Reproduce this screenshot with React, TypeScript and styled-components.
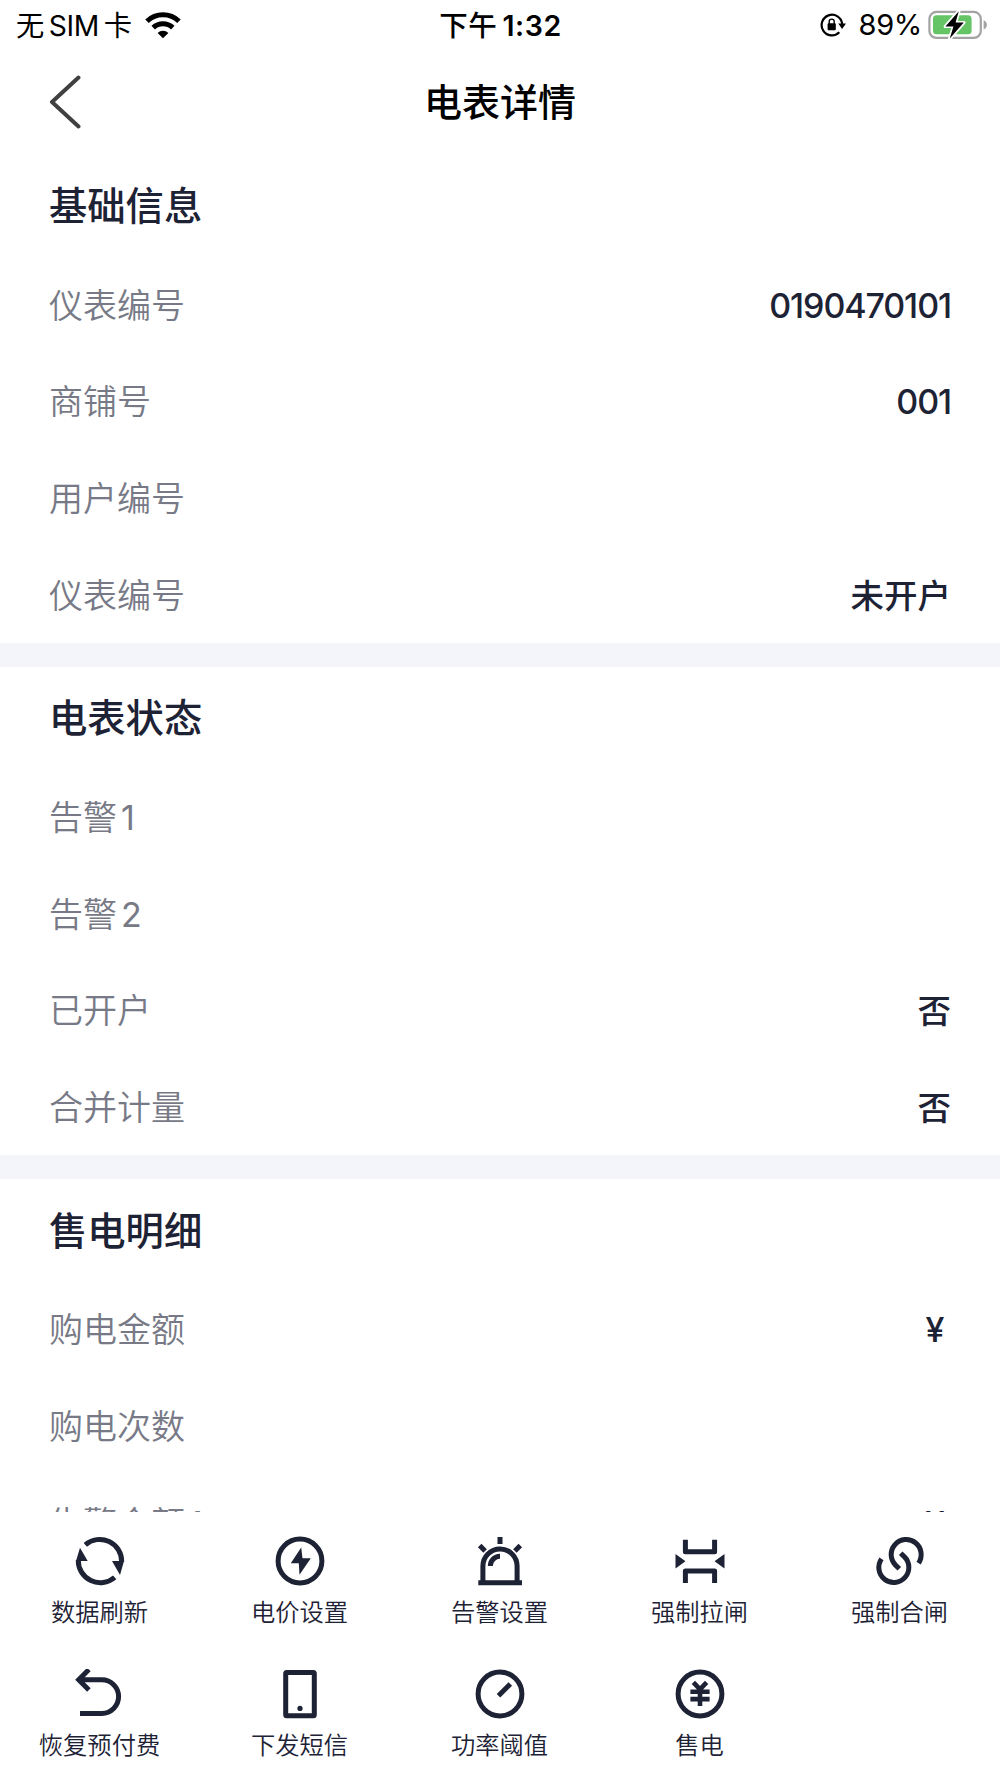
import React from "react";
import styled, { createGlobalStyle } from "styled-components";

const GlobalStyle = createGlobalStyle`
  *, *::before, *::after { box-sizing: border-box; }
  body {
    margin: 0;
    background: #fff;
    font-family: Inter, "Noto Sans CJK SC", sans-serif;
    color: #1d2235;
  }
`;

const Screen = styled.div`
  display: flex;
  flex-direction: column;
  width: 1000px;
  height: 1778px;
  overflow: hidden;
  background: #fff;
`;

const StatusBar = styled.header`
  flex: none;
  display: grid;
  grid-template-columns: 1fr auto 1fr;
  align-items: center;
  height: 53px;
  padding: 0 12px 4px 16px;
  color: #000;
  font-size: 28.3px;
  white-space: nowrap;
`;

const StatusGroup = styled.div<{ $end?: boolean }>`
  display: flex;
  align-items: center;
  justify-content: ${(p) => (p.$end ? "flex-end" : "flex-start")};
`;

const Carrier = styled.span`
  margin: -2px 12px 0 0;
  letter-spacing: -0.3px;
  word-spacing: -3px;
`;

const Clock = styled.time`
  margin: -2px 3px 0 0;
  font-weight: 600;
  font-size: 28.5px;
  letter-spacing: 0.6px;
`;

const Meridiem = styled.span`
  font-weight: 500;
  margin-right: 5px;
`;

const Percent = styled.span`
  margin: 0 6px 0 12px;
  font-size: 29px;
  letter-spacing: -0.3px;
`;

const NavBar = styled.nav`
  flex: none;
  display: grid;
  grid-template-columns: 1fr auto 1fr;
  align-items: center;
  height: 101.3px;
  padding: 0 49px 4px 49px;
`;

const BackButton = styled.button`
  display: flex;
  width: 34px;
  padding: 0;
  border: 0;
  background: none;
`;

const PageTitle = styled.h1`
  margin: 0;
  color: #000;
  font-size: 38px;
  font-weight: 500;
  line-height: 52px;
`;

const Content = styled.main`
  flex: 1;
  min-height: 0;
  overflow: hidden;
`;

const Section = styled.section`
  padding: 0 49px;
  border-bottom: 24px solid #f4f5fa;
  height: 512.3px;
`;

const SectionTitle = styled.h2`
  display: flex;
  align-items: center;
  height: 101.6px;
  margin: 0;
  padding-bottom: 3px;
  font-size: 38.3px;
  font-weight: 500;
`;

const Row = styled.div`
  display: flex;
  align-items: center;
  justify-content: space-between;
  height: 96.67px;
  padding-top: 3px;
  font-size: 34px;
  line-height: 50px;
`;

const Label = styled.span`
  color: #777a86;
  font-weight: 350;
`;

const LabelNumber = styled.span`
  margin-left: 4px;
  font-weight: 400;
`;

const Value = styled.span<{ $kind: "number" | "currency" | "text" }>`
  font-size: ${(p) => (p.$kind === "text" ? "33.5px" : "34px")};
  font-weight: ${(p) => (p.$kind === "text" ? 500 : 450)};
  letter-spacing: ${(p) => (p.$kind === "number" ? "-1.1px" : "0")};
  margin-right: ${(p) => (p.$kind === "currency" ? "6.5px" : "0")};
`;

const Toolbar = styled.footer`
  flex: none;
  display: grid;
  grid-template-columns: repeat(5, 200px);
  grid-auto-rows: 133.2px;
  height: 266.4px;
  background: #fff;
`;

const Action = styled.button`
  display: flex;
  flex-direction: column;
  align-items: center;
  padding: 24.5px 1px 0 0;
  border: 0;
  background: none;
  color: #1d2235;
  font-family: inherit;
  font-size: 24.3px;
  font-weight: 350;
  line-height: 34px;
`;

const ActionIcon = styled.svg`
  display: block;
  width: 50px;
  height: 50px;
  margin: 0 0 9px 1.6px;
  fill: none;
  stroke: currentColor;
  stroke-width: 5;
`;

const Solid = styled.g`
  fill: currentColor;
  stroke: none;
`;

const icons = {
  refresh: (
    <>
      <path d="M10.3 8.8A22 22 0 0 1 46.7 26M39.7 41.3A22 22 0 0 1 3.3 24" />
      <Solid>
        <path d="M37 25h12l-4 14zM5 11.7 12.7 25H1z" />
      </Solid>
    </>
  ),
  price: (
    <>
      <circle cx="25" cy="25" r="21.9" />
      <Solid>
        <path d="M26.2 11.5 15.8 27.2h8l.7 11.6L35.8 22.3h-8.3z" />
      </Solid>
    </>
  ),
  alarm: (
    <path d="M25 1v7M4.7 9.5l5.4 5.4M45.3 9.5l-5.4 5.4M7.9 46V30a17.1 17.1 0 0 1 34.2 0v16M3.3 46.8h43.7M15.3 30a9.7 9.7 0 0 1 9.7-9.7" />
  ),
  open: (
    <>
      <path strokeLinejoin="round" d="M10.4 3.7v12h29.2v-12M10.4 47V35h29.2v12" />
      <Solid>
        <path d="m.5 18 10 7.3-10 7.3zM49.5 18l-10 7.3 10 7.3z" />
      </Solid>
    </>
  ),
  close: (
    <path d="M24.3 32.8 20.5 29.1A15 15 0 1 1 43.5 27.1M25.7 17.2 29.5 20.9A15 15 0 1 1 6.5 22.9" />
  ),
  restore: <path d="M13.9.5 3.7 10.8l10.2 10.3M4 10.8h22.8a16.8 16.8 0 0 1 0 33.6H5" />,
  phone: (
    <>
      <rect x="10.7" y="3.5" width="28.6" height="43.3" rx="1" />
      <Solid>
        <circle cx="25" cy="39.4" r="2.6" />
      </Solid>
    </>
  ),
  gauge: (
    <>
      <circle cx="25" cy="25" r="21.9" />
      <path d="M23.5 26.7 35.3 14.9" />
    </>
  ),
  sell: (
    <>
      <circle cx="25" cy="25" r="21.9" />
      <path
        strokeWidth="4.6"
        d="m18.4 13.4 6.6 7 6.6-7M25 19v18M15.4 22.7h19.2M15.4 30.1h19.2"
      />
    </>
  ),
};

const actions: { icon: keyof typeof icons; text: string }[] = [
  { icon: "refresh", text: "数据刷新" },
  { icon: "price", text: "电价设置" },
  { icon: "alarm", text: "告警设置" },
  { icon: "open", text: "强制拉闸" },
  { icon: "close", text: "强制合闸" },
  { icon: "restore", text: "恢复预付费" },
  { icon: "phone", text: "下发短信" },
  { icon: "gauge", text: "功率阈值" },
  { icon: "sell", text: "售电" },
];

type RowData = { label: string; index?: number; value?: string };

const sections: { title: string; rows: RowData[] }[] = [
  {
    title: "基础信息",
    rows: [
      { label: "仪表编号", value: "0190470101" },
      { label: "商铺号", value: "001" },
      { label: "用户编号" },
      { label: "仪表编号", value: "未开户" },
    ],
  },
  {
    title: "电表状态",
    rows: [
      { label: "告警", index: 1 },
      { label: "告警", index: 2 },
      { label: "已开户", value: "否" },
      { label: "合并计量", value: "否" },
    ],
  },
  {
    title: "售电明细",
    rows: [
      { label: "购电金额", value: "¥" },
      { label: "购电次数" },
      { label: "告警金额", index: 1, value: "¥" },
    ],
  },
];

const kindOf = (value: string) =>
  value === "¥" ? "currency" : /^\d+$/.test(value) ? "number" : "text";

const WifiIcon = () => (
  <svg width="38" height="28" viewBox="0 0 38 28">
    <path d="M3 10.2a23 23 0 0 1 32 0M9.2 16.6a14.2 14.2 0 0 1 19.6 0" fill="none" stroke="#000" strokeWidth="5" />
    <path d="M19 27.2l-5.4-5.3a7.8 7.8 0 0 1 10.8 0z" />
  </svg>
);

const RotationLockIcon = () => (
  <svg width="26" height="24" viewBox="0 0 26 24">
    <path d="M19.3 19.3A10.3 10.3 0 1 1 22.2 11" fill="none" stroke="#000" strokeWidth="2.2" />
    <path d="M18.3 10.4H26l-3.9 5.6z" />
    <rect x="7.6" y="10.2" width="8.2" height="7" rx="1" />
    <path d="M9.2 11V8.6a2.5 2.5 0 0 1 5 0V11" fill="none" stroke="#000" strokeWidth="1.4" />
  </svg>
);

const BatteryIcon = () => (
  <svg width="60" height="30" viewBox="0 0 60 30">
    <rect x="1.4" y="1.9" width="51.4" height="26" rx="7" fill="none" stroke="#a3a3a3" strokeWidth="2.2" />
    <path d="M55.6 10.3c4.4 1.6 4.4 7.6 0 9.2z" fill="#a3a3a3" />
    <rect x="5" y="5.3" width="38.6" height="19" rx="3.6" fill="#65c466" />
    <path
      d="M30.8 1.2 17.4 16.4h8l-3.6 12.2 14-16h-8.2z"
      stroke="#fff"
      strokeWidth="3.4"
      strokeLinejoin="round"
      paintOrder="stroke"
    />
  </svg>
);

export default function App() {
  return (
    <>
      <GlobalStyle />
      <Screen>
        <StatusBar>
          <StatusGroup>
            <Carrier>无 SIM 卡</Carrier>
            <WifiIcon />
          </StatusGroup>
          <Clock>
            <Meridiem>下午</Meridiem>1:32
          </Clock>
          <StatusGroup $end>
            <RotationLockIcon />
            <Percent>89%</Percent>
            <BatteryIcon />
          </StatusGroup>
        </StatusBar>
        <NavBar>
          <BackButton aria-label="返回">
            <svg width="34" height="54" viewBox="0 0 34 54">
              <path d="M29.5 2.5 3 27l26.5 24.5" fill="none" stroke="#404040" strokeWidth="4" strokeLinecap="round" strokeLinejoin="round" />
            </svg>
          </BackButton>
          <PageTitle>电表详情</PageTitle>
        </NavBar>
        <Content>
          {sections.map((section) => (
            <Section key={section.title}>
              <SectionTitle>{section.title}</SectionTitle>
              {section.rows.map(({ label, index, value }, i) => (
                <Row key={i}>
                  <Label>
                    {label}
                    {index && <LabelNumber>{index}</LabelNumber>}
                  </Label>
                  {value && <Value $kind={kindOf(value)}>{value}</Value>}
                </Row>
              ))}
            </Section>
          ))}
        </Content>
        <Toolbar>
          {actions.map(({ icon, text }) => (
            <Action key={text}>
              <ActionIcon viewBox="0 0 50 50">{icons[icon]}</ActionIcon>
              {text}
            </Action>
          ))}
        </Toolbar>
      </Screen>
    </>
  );
}
